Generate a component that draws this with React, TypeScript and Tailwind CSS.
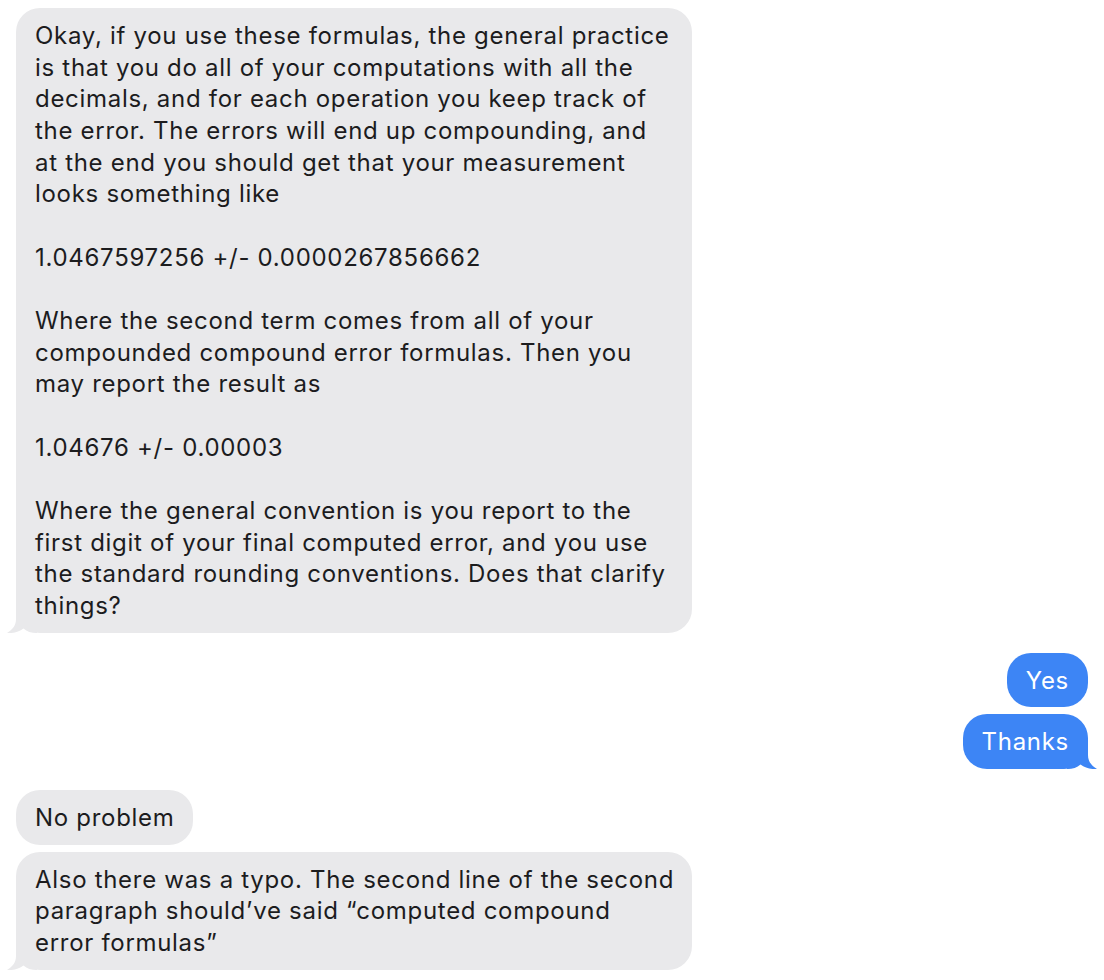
import type { ReactNode } from 'react'

type Side = 'left' | 'right'

function Tail({ side }: { side: Side }) {
  const fill = side === 'left' ? '#e9e9eb' : '#3d85f5'
  return (
    <svg
      width="30"
      height="24"
      viewBox="0 0 30 24"
      className={
        side === 'left'
          ? 'absolute bottom-0 left-[-9px]'
          : 'absolute bottom-0 right-[-9px] -scale-x-100'
      }
    >
      <path d="M9 0 L9 10 C9 17 5 21 0 24 C6 24.5 12 23 16.5 19.5 C20 22.5 24 24 30 24 L30 0 Z" fill={fill} />
    </svg>
  )
}

function Bubble({
  side,
  tail = false,
  wide = false,
  children,
}: {
  side: Side
  tail?: boolean
  wide?: boolean
  children: ReactNode
}) {
  return (
    <div className={side === 'left' ? 'flex justify-start' : 'flex justify-end'}>
      <div
        className={
          'relative rounded-[24px] px-[19px] pt-[12px] pb-[11px] text-[24px] leading-[31.67px] tracking-[0.7px] ' +
          (side === 'left' ? 'bg-[#e9e9eb] text-[#1c1c1e] ' : 'bg-[#3d85f5] text-white ') +
          (wide ? 'w-[676px]' : 'w-fit')
        }
      >
        {tail && <Tail side={side} />}
        <div className="relative whitespace-nowrap">{children}</div>
      </div>
    </div>
  )
}

export default function App() {
  return (
    <main className="min-h-screen bg-white px-4 pt-2 font-['Inter','Noto_Sans',sans-serif] antialiased">
      <Bubble side="left" tail wide>
        Okay, if you use these formulas, the general practice
        <br />
        is that you do all of your computations with all the
        <br />
        decimals, and for each operation you keep track of
        <br />
        the error. The errors will end up compounding, and
        <br />
        at the end you should get that your measurement
        <br />
        looks something like
        <br />
        <br />
        1.0467597256 +/- 0.0000267856662
        <br />
        <br />
        Where the second term comes from all of your
        <br />
        compounded compound error formulas. Then you
        <br />
        may report the result as
        <br />
        <br />
        1.04676 +/- 0.00003
        <br />
        <br />
        Where the general convention is you report to the
        <br />
        first digit of your final computed error, and you use
        <br />
        the standard rounding conventions. Does that clarify
        <br />
        things?
      </Bubble>

      <div className="mt-[20px] flex flex-col gap-[7px]">
        <Bubble side="right">Yes</Bubble>
        <Bubble side="right" tail>
          Thanks
        </Bubble>
      </div>

      <div className="mt-[21px] flex flex-col gap-[7px]">
        <Bubble side="left">No problem</Bubble>
        <Bubble side="left" tail wide>
          Also there was a typo. The second line of the second
          <br />
          paragraph should’ve said “computed compound
          <br />
          error formulas”
        </Bubble>
      </div>
    </main>
  )
}
